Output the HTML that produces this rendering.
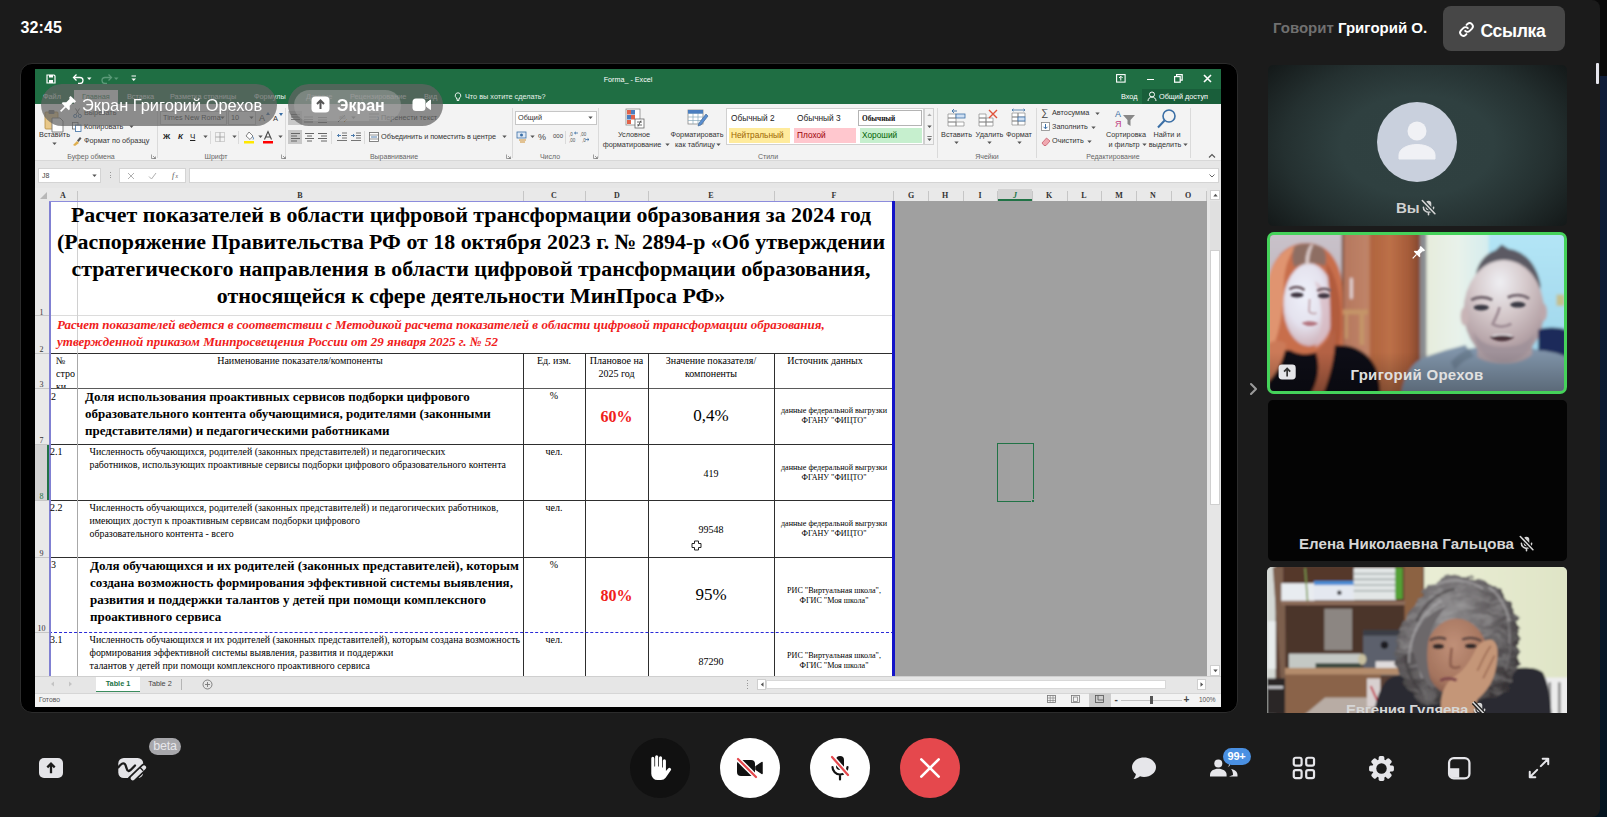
<!DOCTYPE html>
<html lang="ru">
<head>
<meta charset="utf-8">
<title>Конференция</title>
<style>
*{box-sizing:border-box;margin:0;padding:0}
html,body{width:1607px;height:817px;overflow:hidden;background:linear-gradient(#101e3a 0%,#0b1a30 50%,#04141f 100%);font-family:"Liberation Sans",sans-serif;}
.a{position:absolute}
#edgeTop{left:1590px;top:0;width:17px;height:76px;background:#0a0a0a}
#app{left:0;top:0;width:1600px;height:817px;background:#1b1b1b;border-radius:0 8px 8px 0}
#time{left:20.5px;top:19px;font-weight:bold;font-size:16px;line-height:18px;color:#fff;letter-spacing:.1px}
#share{left:20px;top:63px;width:1218px;height:650px;background:#000;border-radius:12px;border:1px solid #2c2c2c}
/* ---------- excel ---------- */
#xl{left:35px;top:69px;width:1186px;height:638px;background:#e6e6e6;overflow:hidden;font-family:"Liberation Sans",sans-serif}
#xl .t{position:absolute;white-space:nowrap}
#xtitle{left:0;top:0;width:1186px;height:35px;background:#1f6e43}
#xrib{left:0;top:35px;width:1186px;height:57px;background:#f3f3f3;border-bottom:1px solid #d8d8d8}
#xfb{left:0;top:92px;width:1186px;height:27px;background:#e6e6e6}
#xch{left:0;top:119px;width:1186px;height:13px;background:#e9e9e9;font-family:"Liberation Serif",serif;font-size:8px;color:#333}
#xch span{position:absolute;top:3px;font-weight:bold;width:20px;margin-left:-10px;text-align:center;line-height:10px}
#xch i{position:absolute;top:3px;width:1px;height:10px;background:#c6c6c6}
#xrh{left:0;top:132px;width:14px;height:475px;background:#e9e9e9;font-family:"Liberation Serif",serif;font-size:8px;color:#333}
#xrh span{position:absolute;left:0;width:13px;text-align:center;line-height:9px}
#xrh i{position:absolute;left:0;width:14px;height:1px;background:#c6c6c6}
#sheet{left:14px;top:132px;width:1159px;height:475.5px;background:#a0a0a0;overflow:hidden}
#page{left:0;top:0;width:845px;height:475px;background:#fff;font-family:"Liberation Serif",serif;color:#000}
#page .h{position:absolute;height:1px;background:#2e2e2e}
#page .v{position:absolute;width:1px;background:#2e2e2e}
#page .c{position:absolute;text-align:center;white-space:nowrap}
#page .l{position:absolute;white-space:nowrap}
#xtabs{left:0;top:607px;width:1186px;height:17px;background:#e6e6e6;border-top:1px solid #cfcfcf}
#xstat{left:0;top:624px;width:1186px;height:14px;background:#f3f3f3;border-top:1px solid #d6d6d6}
/*XLCSS*/
/* ---------- right column ---------- */
.tile{left:1268px;width:299px;border-radius:5px;overflow:hidden}
.micoff{color:#d4d4d4;width:17px;height:18px}
.tname{left:0;width:100%;text-align:center;font-weight:bold;font-size:15px;color:#d6d6d6;line-height:18px;white-space:nowrap}
#spk{left:1273px;top:19px;font-weight:bold;font-size:15px;line-height:18px;color:#fff;white-space:nowrap}
#linkbtn{left:1443px;top:6px;width:122px;height:45px;background:#474747;border-radius:8px}
#scrollind{left:1596px;top:63px;width:3px;height:21px;background:#e6e6ee;border-radius:1px}
#t1{top:65px;height:161px;--mbg:#2c3b3b;background:radial-gradient(ellipse 64% 78% at 50% 50%,#304141 0%,#2f4040 40%,#243030 70%,#141919 100%)}
#t2{left:1267px;width:300px;top:232px;height:162px;border:3px solid #45d25a;border-radius:7px;background:#888}
#t3{left:1267.5px;top:400px;height:161px;background:#040404;--mbg:#040404}
#t4{left:1267px;width:300px;top:567px;height:146px;background:#999;border-radius:5px 5px 0 0}
.pill{border-radius:21px;background:rgba(100,100,100,.72);-webkit-backdrop-filter:blur(.5px);backdrop-filter:blur(.5px)}
/*TILECSS*/
/* ---------- bottom bar ---------- */
.cbtn{top:738px;width:60px;height:60px;border-radius:50%}
/*BARCSS*/
</style>
</head>
<body>
<svg width="0" height="0" style="position:absolute"><defs>
<g id="micoff"><path d="M8 1.800a2.800 2.800 0 0 1 2.800 2.800v3.800a2.800 2.800 0 0 1-5.600 0V4.600A2.800 2.800 0 0 1 8 1.800z" fill="currentColor"/><path d="M2.900 8.200a5.100 5.100 0 0 0 10.200 0M8 13.400v2.400" fill="none" stroke="currentColor" stroke-width="1.600" stroke-linecap="round"/><path d="M1.800 1.500l12.600 13.200" stroke="var(--mbg,#1b1b1b)" stroke-width="4"/><path d="M1.800 1.500l12.600 13.200" stroke="currentColor" stroke-width="1.600" stroke-linecap="round"/></g>
</defs></svg>
<div id="edgeTop" class="a"></div>
<div id="app" class="a"></div>
<div id="time" class="a">32:45</div>
<div id="share" class="a"></div>
<div id="xl" class="a">
<div id="xtitle" class="a"></div>
<div id="xrib" class="a"></div>
<div id="xfb" class="a"></div>
<div id="xch" class="a">
<span style="left:28px">A</span><span style="left:265px">B</span><span style="left:519px">C</span><span style="left:582px">D</span><span style="left:676px">E</span><span style="left:799px">F</span>
<span style="left:876px">G</span><span style="left:910px">H</span><span style="left:945px">I</span><span style="left:1014px">K</span><span style="left:1049px">L</span><span style="left:1084px">M</span><span style="left:1118px">N</span><span style="left:1153px">O</span>
<i style="left:42px"></i><i style="left:488px"></i><i style="left:550px"></i><i style="left:613px"></i><i style="left:739px"></i><i style="left:858px"></i><i style="left:893px"></i><i style="left:928px"></i><i style="left:962px"></i><i style="left:997px"></i><i style="left:1032px"></i><i style="left:1066px"></i><i style="left:1101px"></i><i style="left:1136px"></i><i style="left:1171px"></i>
<b class="a" style="left:963px;top:1px;width:34px;height:12px;background:#d3d3d3;border-bottom:2px solid #217346"></b>
<span style="left:980px;color:#217346;font-style:italic">J</span>
</div>
<div id="xrh" class="a">
<b class="a" style="left:0;top:243px;width:14px;height:57px;background:#d3d3d3;border-right:2px solid #217346"></b>
<span style="top:106.500px">1</span><span style="top:143.500px">2</span><span style="top:178.500px">3</span><span style="top:234.500px">7</span><span style="top:290.500px;color:#217346">8</span><span style="top:347.500px">9</span><span style="top:422.500px">10</span>
<i style="top:114px"></i><i style="top:152px"></i><i style="top:187px"></i><i style="top:243px"></i><i style="top:299px"></i><i style="top:356px"></i><i style="top:431px"></i>
</div>
<div id="sheet" class="a">
<div id="page" class="a">
<!--PAGE-->
<div class="h" style="left:0px;top:114px;width:844px;background:#dcdcdc"></div>
<div class="v" style="left:28px;top:0px;height:152px;background:#d0d0d0"></div>
<div class="h" style="left:0px;top:152px;width:844px;"></div>
<div class="h" style="left:0px;top:243px;width:844px;"></div>
<div class="h" style="left:0px;top:299px;width:844px;"></div>
<div class="h" style="left:0px;top:356px;width:844px;"></div>
<div class="h" style="left:0px;top:187px;width:844px;background:#5a5a5a"></div>
<div class="v" style="left:28px;top:152px;height:323px;background:#a8a8a8"></div>
<div class="v" style="left:474px;top:152px;height:323px;"></div>
<div class="v" style="left:536px;top:152px;height:323px;"></div>
<div class="v" style="left:599px;top:152px;height:323px;"></div>
<div class="v" style="left:725px;top:152px;height:323px;"></div>
<div class="h" style="left:0;top:431px;width:845px;height:0;background:none;border-top:1.5px dashed #2a2ad8"></div>
<div class="v" style="left:0;top:0;height:475px;width:1.6px;background:#8080d2"></div>
<div class="h" style="left:0;top:0;width:845px;background:#8c8cdc"></div>
<div class="c" style="left:0.0px;width:844px;top:0.1px;font-size:21.9px;line-height:27px;font-weight:bold;">Расчет показателей в области цифровой трансформации образования за 2024 год<br>(Распоряжение Правительства РФ от 18 октября 2023 г. № 2894-р «Об утверждении<br>стратегического направления в области цифровой трансформации образования,<br>относящейся к сфере деятельности МинПроса РФ»</div>
<div class="l" style="left:8.0px;top:115.1px;font-size:13px;line-height:17px;font-weight:bold;font-style:italic;color:#f0201a;">Расчет показателей ведется в соответствии с Методикой расчета показателей в области цифровой трансформации образования,<br>утвержденной приказом Минпросвещения России от 29 января 2025 г. № 52</div>
<div class="l" style="left:7.0px;top:153.1px;font-size:10px;line-height:13px;height:34px;overflow:hidden;">№<br>стро<br>ки</div>
<div class="c" style="left:31.0px;width:440px;top:153.1px;font-size:10px;line-height:13px;">Наименование показателя/компоненты</div>
<div class="c" style="left:475.0px;width:60px;top:153.1px;font-size:10px;line-height:13px;">Ед. изм.</div>
<div class="c" style="left:536.5px;width:62px;top:153.1px;font-size:10px;line-height:13px;">Плановое на<br>2025 год</div>
<div class="c" style="left:600.0px;width:124px;top:153.1px;font-size:10px;line-height:13px;">Значение показателя/<br>компоненты</div>
<div class="c" style="left:726.0px;width:100px;top:153.1px;font-size:10px;line-height:13px;">Источник данных</div>
<div class="l" style="left:2.0px;top:188.6px;font-size:10px;line-height:13px;">2</div>
<div class="l" style="left:36.0px;top:187.3px;font-size:13px;line-height:17px;font-weight:bold;">Доля использования проактивных сервисов подборки цифрового<br>образовательного контента обучающимися, родителями (законными<br>представителями) и педагогическими работниками</div>
<div class="c" style="left:475.0px;width:60px;top:187.6px;font-size:10px;line-height:13px;">%</div>
<div class="c" style="left:536.5px;width:62px;top:206.6px;font-size:16px;line-height:18px;font-weight:bold;color:#f0201a;">60%</div>
<div class="c" style="left:600.0px;width:124px;top:206.3px;font-size:17px;line-height:18px;">0,4%</div>
<div class="c" style="left:726.0px;width:118px;top:205.3px;font-size:8.1px;line-height:10px;">данные федеральной выгрузки<br>ФГАНУ "ФИЦТО"</div>
<div class="l" style="left:1.0px;top:244.1px;font-size:10px;line-height:13px;">2.1</div>
<div class="l" style="left:40.5px;top:244.2px;font-size:9.9px;line-height:13px;">Численность обучающихся, родителей (законных представителей) и педагогических<br>работников, использующих проактивные сервисы подборки цифрового образовательного контента</div>
<div class="c" style="left:475.0px;width:60px;top:244.1px;font-size:10px;line-height:13px;">чел.</div>
<div class="c" style="left:600.0px;width:124px;top:266.1px;font-size:10px;line-height:13px;">419</div>
<div class="c" style="left:726.0px;width:118px;top:261.8px;font-size:8.1px;line-height:10px;">данные федеральной выгрузки<br>ФГАНУ "ФИЦТО"</div>
<div class="l" style="left:1.0px;top:300.1px;font-size:10px;line-height:13px;">2.2</div>
<div class="l" style="left:40.5px;top:300.2px;font-size:9.9px;line-height:13px;">Численность обучающихся, родителей (законных представителей) и педагогических работников,<br>имеющих доступ к проактивным сервисам подборки цифрового<br>образовательного контента - всего</div>
<div class="c" style="left:475.0px;width:60px;top:300.1px;font-size:10px;line-height:13px;">чел.</div>
<div class="c" style="left:600.0px;width:124px;top:321.8px;font-size:10px;line-height:13px;">99548</div>
<div class="c" style="left:726.0px;width:118px;top:318.3px;font-size:8.1px;line-height:10px;">данные федеральной выгрузки<br>ФГАНУ "ФИЦТО"</div>
<div class="l" style="left:2.0px;top:357.1px;font-size:10px;line-height:13px;">3</div>
<div class="l" style="left:41.0px;top:355.6px;font-size:13px;line-height:17px;font-weight:bold;">Доля обучающихся и их родителей (законных представителей), которым<br>создана возможность формирования эффективной системы выявления,<br>развития и поддержки талантов у детей при помощи комплексного<br>проактивного сервиса</div>
<div class="c" style="left:475.0px;width:60px;top:357.1px;font-size:10px;line-height:13px;">%</div>
<div class="c" style="left:536.5px;width:62px;top:385.6px;font-size:16px;line-height:18px;font-weight:bold;color:#f0201a;">80%</div>
<div class="c" style="left:600.0px;width:124px;top:385.3px;font-size:17px;line-height:18px;">95%</div>
<div class="c" style="left:726.0px;width:118px;top:384.8px;font-size:8.1px;line-height:10px;">РИС "Виртуальная школа",<br>ФГИС "Моя школа"</div>
<div class="l" style="left:1.0px;top:432.1px;font-size:10px;line-height:13px;">3.1</div>
<div class="l" style="left:40.5px;top:432.2px;font-size:9.9px;line-height:13px;">Численность обучающихся и их родителей (законных представителей), которым создана возможность<br>формирования эффективной системы выявления, развития и поддержки<br>талантов у детей при помощи комплексного проактивного сервиса</div>
<div class="c" style="left:475.0px;width:60px;top:432.1px;font-size:10px;line-height:13px;">чел.</div>
<div class="c" style="left:600.0px;width:124px;top:453.6px;font-size:10px;line-height:13px;">87290</div>
<div class="c" style="left:726.0px;width:118px;top:450.3px;font-size:8.1px;line-height:10px;">РИС "Виртуальная школа",<br>ФГИС "Моя школа"</div>
<!--/PAGE-->
</div>
<div class="a" style="left:843px;top:0;width:3px;height:475px;background:#1414c8"></div>
<div class="a" style="left:948px;top:242px;width:37px;height:59px;border:1.5px solid #217346"></div>
<div class="a" style="left:982px;top:298px;width:4px;height:4px;background:#217346;border:0.5px solid #a0a0a0"></div>
<svg class="a" style="left:642px;top:339px" width="11" height="11" viewBox="0 0 11 11"><path d="M3.500 1h4v2.500H10v4H7.500V10h-4V7.500H1v-4h2.500z" fill="#fff" stroke="#222" stroke-width="1"/></svg>
<!--SHEETX-->
</div>
<div id="xtabs" class="a"></div>
<div id="xstat" class="a"></div>
<!--XL-->
<svg class="a" style="left:11.0px;top:5.0px" width="10" height="10" viewBox="0 0 10 10"><path d="M1 1h7l1 1v7H1z" fill="none" stroke="#fff" stroke-width="1.200"/><rect x="3" y="6" width="4" height="3" fill="#fff"/><rect x="3" y="1" width="4" height="2.500" fill="#fff"/></svg>
<svg class="a" style="left:37.0px;top:4.0px" width="14" height="11" viewBox="0 0 14 11"><path d="M2 4.500h6a3 3 0 0 1 0 6H6" fill="none" stroke="#fff" stroke-width="1.300"/><path d="M4.500 1.500L1.500 4.500l3 3" fill="none" stroke="#fff" stroke-width="1.300"/></svg>
<svg class="a" style="left:52.0px;top:8.0px" width="5" height="4" viewBox="0 0 5 4"><path d="M0 .5h4.500L2.200 3z" fill="#fff"/></svg>
<svg class="a" style="left:64.0px;top:4.0px" width="14" height="11" viewBox="0 0 14 11"><path d="M12 4.500H6a3 3 0 0 0 0 6h2" fill="none" stroke="#5b9a78" stroke-width="1.300"/><path d="M9.500 1.500l3 3-3 3" fill="none" stroke="#5b9a78" stroke-width="1.300"/></svg>
<svg class="a" style="left:79.0px;top:8.0px" width="5" height="4" viewBox="0 0 5 4"><path d="M0 .5h4.500L2.200 3z" fill="#5b9a78"/></svg>
<svg class="a" style="left:96.0px;top:6.0px" width="6" height="7" viewBox="0 0 6 7"><path d="M.5 1h4.500" stroke="#fff" stroke-width="1"/><path d="M.5 3.500h4.500L2.700 6z" fill="#fff"/></svg>
<div class="t" style="left:533.0px;width:120px;text-align:center;top:6.1px;font-size:7.2px;line-height:9.2px;color:#fff;">Forma_ - Excel</div>
<svg class="a" style="left:1081.0px;top:5.0px" width="10" height="9" viewBox="0 0 10 9"><rect x=".6" y=".6" width="8.500" height="7.500" fill="none" stroke="#fff" stroke-width="1.100"/><path d="M4.800 6.500v-4M3 4l1.800-1.800L6.600 4" fill="none" stroke="#fff" stroke-width="1"/></svg>
<div class="a" style="left:1112.0px;top:9.5px;width:7.0px;height:1.5px;background:#fff"></div>
<svg class="a" style="left:1139.0px;top:5.0px" width="9" height="9" viewBox="0 0 9 9"><rect x=".6" y="2.600" width="5.600" height="5.600" fill="none" stroke="#fff" stroke-width="1.200"/><path d="M2.600 2.600V.6h5.600v5.600H6.200" fill="none" stroke="#fff" stroke-width="1.200"/></svg>
<svg class="a" style="left:1168.0px;top:5.0px" width="9" height="9" viewBox="0 0 9 9"><path d="M1 1l7 7M8 1L1 8" stroke="#fff" stroke-width="1.600"/></svg>
<div class="t" style="left:8.0px;top:23.4px;font-size:7.3px;line-height:9.3px;color:#e6f0ea;">Файл</div>
<div class="a" style="left:39.0px;top:21.0px;width:44.0px;height:14.0px;background:#f3f3f3"></div>
<div class="t" style="left:47.0px;top:23.4px;font-size:7.3px;line-height:9.3px;color:#217346;">Главная</div>
<div class="t" style="left:92.0px;top:23.4px;font-size:7.3px;line-height:9.3px;color:#e6f0ea;">Вставка</div>
<div class="t" style="left:135.0px;top:23.4px;font-size:7.3px;line-height:9.3px;color:#e6f0ea;">Разметка страницы</div>
<div class="t" style="left:219.0px;top:23.4px;font-size:7.3px;line-height:9.3px;color:#e6f0ea;">Формулы</div>
<div class="t" style="left:271.0px;top:23.4px;font-size:7.3px;line-height:9.3px;color:#e6f0ea;">Данные</div>
<div class="t" style="left:315.0px;top:23.4px;font-size:7.3px;line-height:9.3px;color:#e6f0ea;">Рецензирование</div>
<div class="t" style="left:389.0px;top:23.4px;font-size:7.3px;line-height:9.3px;color:#e6f0ea;">Вид</div>
<svg class="a" style="left:419.0px;top:23.0px" width="8" height="10" viewBox="0 0 8 10"><path d="M4 .8a2.800 2.800 0 0 0-1.400 5.200v1.200h2.800V6A2.800 2.800 0 0 0 4 .8zM2.800 8.500h2.400" fill="none" stroke="#fff" stroke-width=".9"/></svg>
<div class="t" style="left:430.0px;top:23.4px;font-size:7.3px;line-height:9.3px;color:#e6f0ea;">Что вы хотите сделать?</div>
<div class="t" style="left:1086.0px;top:23.4px;font-size:7.3px;line-height:9.3px;color:#fff;">Вход</div>
<div class="a" style="left:1107.0px;top:20.0px;width:79.0px;height:15.0px;background:#195e3a"></div>
<svg class="a" style="left:1112.0px;top:22.0px" width="10" height="11" viewBox="0 0 10 11"><circle cx="5" cy="3.500" r="2.500" fill="none" stroke="#fff" stroke-width="1"/><path d="M1 10c0-2.500 2-4 4-4s4 1.500 4 4" fill="none" stroke="#fff" stroke-width="1"/></svg>
<div class="t" style="left:1124.0px;top:23.4px;font-size:7.3px;line-height:9.3px;color:#fff;">Общий доступ</div>
<div class="a" style="left:122.0px;top:39.0px;width:1.0px;height:50.0px;background:#dadada"></div>
<div class="a" style="left:250.0px;top:39.0px;width:1.0px;height:50.0px;background:#dadada"></div>
<div class="a" style="left:477.0px;top:39.0px;width:1.0px;height:50.0px;background:#dadada"></div>
<div class="a" style="left:563.0px;top:39.0px;width:1.0px;height:50.0px;background:#dadada"></div>
<div class="a" style="left:902.0px;top:39.0px;width:1.0px;height:50.0px;background:#dadada"></div>
<div class="a" style="left:1001.0px;top:39.0px;width:1.0px;height:50.0px;background:#dadada"></div>
<div class="a" style="left:1155.0px;top:39.0px;width:1.0px;height:50.0px;background:#dadada"></div>
<div class="t" style="left:-4.0px;width:120px;text-align:center;top:83.0px;font-size:7px;line-height:9px;color:#666;">Буфер обмена</div>
<div class="t" style="left:121.0px;width:120px;text-align:center;top:83.0px;font-size:7px;line-height:9px;color:#666;">Шрифт</div>
<div class="t" style="left:299.0px;width:120px;text-align:center;top:83.0px;font-size:7px;line-height:9px;color:#666;">Выравнивание</div>
<div class="t" style="left:455.0px;width:120px;text-align:center;top:83.0px;font-size:7px;line-height:9px;color:#666;">Число</div>
<div class="t" style="left:673.0px;width:120px;text-align:center;top:83.0px;font-size:7px;line-height:9px;color:#666;">Стили</div>
<div class="t" style="left:892.0px;width:120px;text-align:center;top:83.0px;font-size:7px;line-height:9px;color:#666;">Ячейки</div>
<div class="t" style="left:1018.0px;width:120px;text-align:center;top:83.0px;font-size:7px;line-height:9px;color:#666;">Редактирование</div>
<svg class="a" style="left:116.0px;top:85.0px" width="5" height="5" viewBox="0 0 5 5"><path d="M.5 .5v4h4M2 2l2.500 2.500M4.500 2.500v2h-2" fill="none" stroke="#777" stroke-width=".7"/></svg>
<svg class="a" style="left:246.0px;top:85.0px" width="5" height="5" viewBox="0 0 5 5"><path d="M.5 .5v4h4M2 2l2.500 2.500M4.500 2.500v2h-2" fill="none" stroke="#777" stroke-width=".7"/></svg>
<svg class="a" style="left:471.0px;top:85.0px" width="5" height="5" viewBox="0 0 5 5"><path d="M.5 .5v4h4M2 2l2.500 2.500M4.500 2.500v2h-2" fill="none" stroke="#777" stroke-width=".7"/></svg>
<svg class="a" style="left:558.0px;top:85.0px" width="5" height="5" viewBox="0 0 5 5"><path d="M.5 .5v4h4M2 2l2.500 2.500M4.500 2.500v2h-2" fill="none" stroke="#777" stroke-width=".7"/></svg>
<svg class="a" style="left:1173.0px;top:84.0px" width="8" height="6" viewBox="0 0 8 6"><path d="M1 4.500l3-3 3 3" fill="none" stroke="#555" stroke-width="1.100"/></svg>
<svg class="a" style="left:9.0px;top:40.0px" width="20" height="24" viewBox="0 0 20 24"><rect x="1" y="3" width="13" height="17" rx="1" fill="#e8c88a" stroke="#b48a3c" stroke-width=".8"/><rect x="4.500" y="1" width="6" height="4" rx="1" fill="#777"/><path d="M8 9h8l3 3v11H8z" fill="#fff" stroke="#777" stroke-width=".9"/></svg>
<div class="t" style="left:-40.5px;width:120px;text-align:center;top:61.4px;font-size:7.3px;line-height:9.3px;color:#333;">Вставить</div>
<svg class="a" style="left:17.0px;top:73.0px" width="5" height="4" viewBox="0 0 5 4"><path d="M.3 .5h4.400L2.500 3z" fill="#555"/></svg>
<svg class="a" style="left:38.0px;top:39.0px" width="9" height="10" viewBox="0 0 9 10"><circle cx="2.200" cy="8" r="1.600" fill="none" stroke="#3a6ea5" stroke-width=".9"/><circle cx="6.800" cy="8" r="1.600" fill="none" stroke="#3a6ea5" stroke-width=".9"/><path d="M2.800 6.500L6.500 .5M6.200 6.500L2.500 .5" stroke="#666" stroke-width=".9"/></svg>
<div class="t" style="left:49.0px;top:39.4px;font-size:7.3px;line-height:9.3px;color:#333;">Вырезать</div>
<svg class="a" style="left:37.0px;top:53.0px" width="10" height="10" viewBox="0 0 10 10"><rect x=".5" y=".5" width="5.500" height="6.500" fill="#fff" stroke="#666" stroke-width=".8"/><rect x="3.500" y="3" width="5.500" height="6.500" fill="#fff" stroke="#3a6ea5" stroke-width=".8"/></svg>
<div class="t" style="left:49.0px;top:53.4px;font-size:7.3px;line-height:9.3px;color:#333;">Копировать</div>
<svg class="a" style="left:94.0px;top:56.0px" width="5" height="4" viewBox="0 0 5 4"><path d="M.3 .5h4.400L2.500 3z" fill="#555"/></svg>
<svg class="a" style="left:37.0px;top:67.0px" width="10" height="10" viewBox="0 0 10 10"><path d="M1 9l4-4 2 2-4 3z" fill="#e0b050"/><path d="M5 4.500l3-3.500 1.500 1.500L6.500 6z" fill="#555"/></svg>
<div class="t" style="left:49.0px;top:67.3px;font-size:7.3px;line-height:9.3px;color:#333;">Формат по образцу</div>
<div class="a" style="left:125.0px;top:42.0px;width:67.0px;height:14.0px;background:#fff;border:1px solid #c6c6c6"></div>
<div class="t" style="left:128.0px;top:44.4px;font-size:7.3px;line-height:9.3px;color:#333;">Times New Roma</div>
<svg class="a" style="left:185.0px;top:47.0px" width="5" height="4" viewBox="0 0 5 4"><path d="M.3 .5h4.400L2.500 3z" fill="#555"/></svg>
<div class="a" style="left:193.0px;top:42.0px;width:28.0px;height:14.0px;background:#fff;border:1px solid #c6c6c6"></div>
<div class="t" style="left:196.0px;top:44.4px;font-size:7.3px;line-height:9.3px;color:#333;">10</div>
<svg class="a" style="left:214.0px;top:47.0px" width="5" height="4" viewBox="0 0 5 4"><path d="M.3 .5h4.400L2.500 3z" fill="#555"/></svg>
<div class="t" style="left:224.0px;top:43.5px;font-size:9px;line-height:11px;color:#333;">A</div>
<div class="t" style="left:238.0px;top:45.2px;font-size:7.5px;line-height:9.5px;color:#333;">A</div>
<svg class="a" style="left:231.0px;top:43.0px" width="4" height="3" viewBox="0 0 4 3"><path d="M0 3L2 0l2 3z" fill="#3a6ea5"/></svg>
<svg class="a" style="left:244.0px;top:44.0px" width="4" height="3" viewBox="0 0 4 3"><path d="M0 0h4L2 3z" fill="#3a6ea5"/></svg>
<div class="t" style="left:128.0px;top:63.0px;font-size:8px;line-height:10px;color:#222;font-weight:bold;">Ж</div>
<div class="t" style="left:143.0px;top:63.0px;font-size:8px;line-height:10px;color:#222;font-weight:bold;font-style:italic;">К</div>
<div class="t" style="left:155.0px;top:63.0px;font-size:8px;line-height:10px;color:#222;text-decoration:underline;">Ч</div>
<svg class="a" style="left:168.0px;top:66.0px" width="5" height="4" viewBox="0 0 5 4"><path d="M.3 .5h4.400L2.500 3z" fill="#555"/></svg>
<svg class="a" style="left:197.0px;top:66.0px" width="5" height="4" viewBox="0 0 5 4"><path d="M.3 .5h4.400L2.500 3z" fill="#555"/></svg>
<svg class="a" style="left:223.0px;top:66.0px" width="5" height="4" viewBox="0 0 5 4"><path d="M.3 .5h4.400L2.500 3z" fill="#555"/></svg>
<svg class="a" style="left:243.0px;top:66.0px" width="5" height="4" viewBox="0 0 5 4"><path d="M.3 .5h4.400L2.500 3z" fill="#555"/></svg>
<svg class="a" style="left:180.0px;top:63.0px" width="11" height="11" viewBox="0 0 11 11"><rect x=".5" y=".5" width="9" height="9" fill="none" stroke="#999" stroke-width=".8" stroke-dasharray="1 1"/><path d="M5 .5v9M.5 5h9" stroke="#999" stroke-width=".8"/></svg>
<div class="a" style="left:175.0px;top:62.0px;width:1.0px;height:13.0px;background:#dadada"></div>
<div class="a" style="left:203.0px;top:62.0px;width:1.0px;height:13.0px;background:#dadada"></div>
<div class="a" style="left:296.0px;top:62.0px;width:1.0px;height:13.0px;background:#dadada"></div>
<div class="a" style="left:329.0px;top:62.0px;width:1.0px;height:13.0px;background:#dadada"></div>
<svg class="a" style="left:208.0px;top:61.0px" width="12" height="14" viewBox="0 0 12 14"><path d="M3 6l3-4 4 4-3 3.500z" fill="#fff" stroke="#666" stroke-width=".8"/><path d="M9.500 6.500c1 1.500 1.500 2.500 .6 3" stroke="#3a6ea5" fill="none" stroke-width=".9"/><rect x="1" y="11" width="10" height="2.500" fill="#ffe800"/></svg>
<svg class="a" style="left:227.0px;top:61.0px" width="12" height="14" viewBox="0 0 12 14"><path d="M2.500 9.500L6 1.500l3.500 8M3.800 7h4.400" fill="none" stroke="#444" stroke-width="1.100"/><rect x="1" y="11" width="10" height="2.500" fill="#f00"/></svg>
<div class="a" style="left:253.0px;top:42.0px;width:14.0px;height:14.0px;background:#c8c8c8"></div>
<svg class="a" style="left:256.0px;top:45.0px" width="9" height="10" viewBox="0 0 9 10"><rect x="0" y="0.0" width="9" height="1" fill="#777"/><rect x="0" y="2.5" width="9" height="1" fill="#777"/><rect x="0" y="5.0" width="9" height="1" fill="#777"/><rect x="0" y="7.5" width="0" height="1" fill="#777"/></svg>
<svg class="a" style="left:269.0px;top:45.0px" width="9" height="10" viewBox="0 0 9 10"><rect x="0" y="0.0" width="0" height="1" fill="#777"/><rect x="0" y="2.5" width="9" height="1" fill="#777"/><rect x="0" y="5.0" width="9" height="1" fill="#777"/><rect x="0" y="7.5" width="9" height="1" fill="#777"/></svg>
<svg class="a" style="left:283.0px;top:48.0px" width="9" height="10" viewBox="0 0 9 10"><rect x="0" y="0.0" width="9" height="1" fill="#777"/><rect x="0" y="2.5" width="9" height="1" fill="#777"/><rect x="0" y="5.0" width="9" height="1" fill="#777"/></svg>
<svg class="a" style="left:302.0px;top:43.0px" width="12" height="12" viewBox="0 0 12 12"><path d="M1 10l7-7" stroke="#666" stroke-width="1"/><text x="2" y="7" font-size="6" fill="#777" font-family="Liberation Sans">ab</text><path d="M7 10l3-3" stroke="#d09030" stroke-width="1"/></svg>
<svg class="a" style="left:316.0px;top:47.0px" width="5" height="4" viewBox="0 0 5 4"><path d="M.3 .5h4.400L2.500 3z" fill="#555"/></svg>
<svg class="a" style="left:334.0px;top:43.0px" width="11" height="11" viewBox="0 0 11 11"><path d="M0 2h10M0 5h7M0 8h10" stroke="#777" stroke-width=".9"/><path d="M7.500 5h2v2.500h-1.500" fill="none" stroke="#3a6ea5" stroke-width=".9"/></svg>
<div class="t" style="left:346.0px;top:44.4px;font-size:7.3px;line-height:9.3px;color:#333;">Перенести текст</div>
<div class="a" style="left:253.0px;top:61.0px;width:14.0px;height:14.0px;background:#c8c8c8"></div>
<svg class="a" style="left:256.0px;top:64.0px" width="9" height="10" viewBox="0 0 9 10"><rect x="0" y="0.0" width="9" height="1" fill="#666"/><rect x="0" y="2.5" width="6" height="1" fill="#666"/><rect x="0" y="5.0" width="9" height="1" fill="#666"/><rect x="0" y="7.5" width="6" height="1" fill="#666"/></svg>
<svg class="a" style="left:270.0px;top:64.0px" width="9" height="10" viewBox="0 0 9 10"><rect x="0.0" y="0.0" width="9" height="1" fill="#666"/><rect x="2.0" y="2.5" width="5" height="1" fill="#666"/><rect x="0.0" y="5.0" width="9" height="1" fill="#666"/><rect x="2.0" y="7.5" width="5" height="1" fill="#666"/></svg>
<svg class="a" style="left:283.0px;top:64.0px" width="9" height="10" viewBox="0 0 9 10"><rect x="0" y="0.0" width="9" height="1" fill="#666"/><rect x="3" y="2.5" width="6" height="1" fill="#666"/><rect x="0" y="5.0" width="9" height="1" fill="#666"/><rect x="3" y="7.5" width="6" height="1" fill="#666"/></svg>
<svg class="a" style="left:302.0px;top:63.0px" width="11" height="11" viewBox="0 0 11 11"><path d="M5 1h5M5 3.500h5M5 6h5M0 8.500h10" stroke="#666" stroke-width=".9"/><path d="M4 3.500H.5M2 2L.5 3.500 2 5" stroke="#3a6ea5" stroke-width=".9" fill="none"/></svg>
<svg class="a" style="left:316.0px;top:63.0px" width="11" height="11" viewBox="0 0 11 11"><path d="M5 1h5M5 3.500h5M5 6h5M0 8.500h10" stroke="#666" stroke-width=".9"/><path d="M0 3.500h3.500M2 2l1.500 1.500L2 5" stroke="#3a6ea5" stroke-width=".9" fill="none"/></svg>
<svg class="a" style="left:334.0px;top:63.0px" width="10" height="11" viewBox="0 0 10 11"><rect x=".5" y=".5" width="9" height="9" fill="#fff" stroke="#666" stroke-width=".8"/><path d="M.5 3h9M.5 7h9" stroke="#666" stroke-width=".7"/><path d="M2 5h6" stroke="#3a6ea5" stroke-width=".9"/></svg>
<div class="t" style="left:346.0px;top:63.4px;font-size:7.3px;line-height:9.3px;color:#333;letter-spacing:-.05px;">Объединить и поместить в центре</div>
<svg class="a" style="left:467.0px;top:66.0px" width="5" height="4" viewBox="0 0 5 4"><path d="M.3 .5h4.400L2.500 3z" fill="#555"/></svg>
<div class="a" style="left:480.0px;top:42.0px;width:82.0px;height:14.0px;background:#fff;border:1px solid #c6c6c6"></div>
<div class="t" style="left:483.0px;top:44.4px;font-size:7.3px;line-height:9.3px;color:#333;">Общий</div>
<svg class="a" style="left:553.0px;top:47.0px" width="5" height="4" viewBox="0 0 5 4"><path d="M.3 .5h4.400L2.500 3z" fill="#555"/></svg>
<svg class="a" style="left:481.0px;top:62.0px" width="12" height="12" viewBox="0 0 12 12"><rect x="1" y="1" width="9" height="6" fill="#dfe9f5" stroke="#3a6ea5" stroke-width=".8"/><circle cx="5.500" cy="4" r="1.500" fill="#3a6ea5"/><path d="M3 9h7M4 11h5" stroke="#d09030" stroke-width="1"/></svg>
<svg class="a" style="left:495.0px;top:66.0px" width="5" height="4" viewBox="0 0 5 4"><path d="M.3 .5h4.400L2.500 3z" fill="#555"/></svg>
<div class="t" style="left:503.0px;top:62.5px;font-size:9px;line-height:11px;color:#444;">%</div>
<div class="t" style="left:518.0px;top:63.0px;font-size:6px;line-height:8px;color:#444;">000</div>
<div class="a" style="left:530.0px;top:62.0px;width:1.0px;height:13.0px;background:#dadada"></div>
<svg class="a" style="left:534.0px;top:62.0px" width="10" height="12" viewBox="0 0 10 12"><text x="0" y="5" font-size="4.500" fill="#555" font-family="Liberation Sans">,0</text><text x="0" y="10.500" font-size="4.500" fill="#555" font-family="Liberation Sans">,00</text><path d="M9 2H5.500M7 .8L5.500 2 7 3.200" stroke="#3a6ea5" stroke-width=".8" fill="none"/></svg>
<svg class="a" style="left:545.0px;top:62.0px" width="10" height="12" viewBox="0 0 10 12"><text x="0" y="5" font-size="4.500" fill="#555" font-family="Liberation Sans">,00</text><text x="2" y="10.500" font-size="4.500" fill="#555" font-family="Liberation Sans">,0</text><path d="M5.500 8.500H9M7.500 7.300L9 8.500 7.500 9.700" stroke="#3a6ea5" stroke-width=".8" fill="none"/></svg>
<svg class="a" style="left:590.0px;top:39.0px" width="20" height="22" viewBox="0 0 20 22"><rect x="1" y="1" width="14" height="16" fill="#fff" stroke="#888" stroke-width=".8"/><rect x="2" y="2" width="4" height="4.500" fill="#e0634a"/><rect x="6" y="2" width="4" height="4.500" fill="#4a7ec0"/><rect x="2" y="7" width="4" height="4.500" fill="#4a7ec0"/><rect x="6" y="7" width="4" height="4.500" fill="#e0634a"/><rect x="2" y="12" width="4" height="4" fill="#e0634a"/><rect x="10" y="11" width="9" height="9" fill="#fff" stroke="#666" stroke-width=".8"/><path d="M12 14h5M12 17h5M16 12.500l-3 6" stroke="#444" stroke-width=".8"/></svg>
<div class="t" style="left:539.0px;width:120px;text-align:center;top:60.9px;font-size:7.3px;line-height:9.3px;color:#333;">Условное</div>
<div class="t" style="left:537.0px;width:120px;text-align:center;top:70.8px;font-size:7.3px;line-height:9.3px;color:#333;">форматирование</div>
<svg class="a" style="left:630.0px;top:74.0px" width="5" height="4" viewBox="0 0 5 4"><path d="M.3 .5h4.400L2.500 3z" fill="#555"/></svg>
<svg class="a" style="left:652.0px;top:39.0px" width="22" height="22" viewBox="0 0 22 22"><rect x="1" y="2" width="15" height="14" fill="#fff" stroke="#888" stroke-width=".8"/><path d="M1 5.500h15M1 9h15M1 12.500h15M6 2v14M11 2v14" stroke="#8ab" stroke-width=".7"/><rect x="1" y="2" width="15" height="3.500" fill="#4a7ec0"/><path d="M19 6l2 2-7 9-3 1 1-3z" fill="#5a8ed0" stroke="#35608f" stroke-width=".6"/></svg>
<div class="t" style="left:602.0px;width:120px;text-align:center;top:60.9px;font-size:7.3px;line-height:9.3px;color:#333;">Форматировать</div>
<div class="t" style="left:600.0px;width:120px;text-align:center;top:70.8px;font-size:7.3px;line-height:9.3px;color:#333;">как таблицу</div>
<svg class="a" style="left:681.0px;top:74.0px" width="5" height="4" viewBox="0 0 5 4"><path d="M.3 .5h4.400L2.500 3z" fill="#555"/></svg>
<div class="a" style="left:691.0px;top:39.0px;width:198.0px;height:37.0px;background:#fff;border:1px solid #d0d0d0"></div>
<div class="t" style="left:696.0px;top:44.4px;font-size:8.3px;line-height:10.3px;color:#222;">Обычный 2</div>
<div class="t" style="left:762.0px;top:44.4px;font-size:8.3px;line-height:10.3px;color:#222;">Обычный 3</div>
<div class="a" style="left:823.0px;top:41.0px;width:64.0px;height:16.0px;background:#fff;border:1.500px solid #b4b4b4"></div>
<div class="t" style="left:827.0px;top:44.9px;font-size:7.3px;line-height:9.3px;color:#111;font-family:'Liberation Serif',serif;font-weight:bold;">Обычный</div>
<div class="a" style="left:694.0px;top:59.0px;width:61.0px;height:15.0px;background:#ffeb9c"></div>
<div class="t" style="left:696.0px;top:61.4px;font-size:8.3px;line-height:10.3px;color:#9c6500;">Нейтральный</div>
<div class="a" style="left:759.0px;top:59.0px;width:62.0px;height:15.0px;background:#ffc7ce"></div>
<div class="t" style="left:762.0px;top:61.4px;font-size:8.3px;line-height:10.3px;color:#9c0006;">Плохой</div>
<div class="a" style="left:825.0px;top:59.0px;width:62.0px;height:15.0px;background:#c6efce"></div>
<div class="t" style="left:827.0px;top:61.4px;font-size:8.3px;line-height:10.3px;color:#006100;">Хороший</div>
<div class="a" style="left:889.0px;top:39.0px;width:10.0px;height:37.0px;background:#f3f3f3;border:1px solid #d0d0d0"></div>
<svg class="a" style="left:891.5px;top:44.0px" width="5" height="4" viewBox="0 0 5 4"><path d="M.3 3L2.500 .5 4.700 3z" fill="#aaa"/></svg>
<svg class="a" style="left:891.5px;top:56.0px" width="5" height="4" viewBox="0 0 5 4"><path d="M.3 .5h4.400L2.500 3z" fill="#555"/></svg>
<svg class="a" style="left:891.5px;top:67.0px" width="5" height="6" viewBox="0 0 5 6"><path d="M.3 .5h4.400" stroke="#555" stroke-width=".8"/><path d="M.3 2.500h4.400L2.500 5z" fill="#555"/></svg>
<svg class="a" style="left:912.0px;top:39.0px" width="20" height="20" viewBox="0 0 20 20"><path d="M1 6h8v4H1zM1 10h8v4H1zM1 14h8v4H1zM9 14h8v4H9z" fill="#fff" stroke="#888" stroke-width=".7"/><rect x="9" y="6" width="9" height="4" fill="#cfe0f3" stroke="#3a6ea5" stroke-width=".8"/><path d="M10 3H5M7 1L5 3l2 2" stroke="#3a6ea5" stroke-width=".9" fill="none"/></svg>
<div class="t" style="left:861.5px;width:120px;text-align:center;top:60.9px;font-size:7.3px;line-height:9.3px;color:#333;">Вставить</div>
<svg class="a" style="left:943.0px;top:39.0px" width="22" height="20" viewBox="0 0 22 20"><path d="M1 6h7v4H1zM1 10h7v4H1zM1 14h7v4H1zM8 10h7v4H8zM8 14h7v4H8z" fill="#fff" stroke="#888" stroke-width=".7"/><path d="M11 2l8 8M19 2l-8 8" stroke="#e0533a" stroke-width="1.400"/></svg>
<div class="t" style="left:894.5px;width:120px;text-align:center;top:60.9px;font-size:7.3px;line-height:9.3px;color:#333;">Удалить</div>
<svg class="a" style="left:974.0px;top:39.0px" width="20" height="20" viewBox="0 0 20 20"><path d="M3 5h6v4H3zM3 9h6v4H3zM3 13h6v4H3zM9 13h7v4H9zM9 5h7v4H9z" fill="#fff" stroke="#888" stroke-width=".7"/><rect x="9" y="9" width="7" height="4" fill="#cfe0f3" stroke="#3a6ea5" stroke-width=".8"/><path d="M3 2h13M4.500 .8L3 2l1.500 1.200M14.500 .8L16 2l-1.500 1.200" stroke="#3a6ea5" stroke-width=".8" fill="none"/></svg>
<div class="t" style="left:924.0px;width:120px;text-align:center;top:60.9px;font-size:7.3px;line-height:9.3px;color:#333;">Формат</div>
<svg class="a" style="left:919.0px;top:72.0px" width="5" height="4" viewBox="0 0 5 4"><path d="M.3 .5h4.400L2.500 3z" fill="#555"/></svg>
<svg class="a" style="left:952.0px;top:72.0px" width="5" height="4" viewBox="0 0 5 4"><path d="M.3 .5h4.400L2.500 3z" fill="#555"/></svg>
<svg class="a" style="left:981.5px;top:72.0px" width="5" height="4" viewBox="0 0 5 4"><path d="M.3 .5h4.400L2.500 3z" fill="#555"/></svg>
<div class="t" style="left:1006.0px;top:38.0px;font-size:10px;line-height:12px;color:#444;">∑</div>
<div class="t" style="left:1017.0px;top:39.4px;font-size:7.3px;line-height:9.3px;color:#333;">Автосумма</div>
<svg class="a" style="left:1060.0px;top:42.5px" width="5" height="4" viewBox="0 0 5 4"><path d="M.3 .5h4.400L2.500 3z" fill="#555"/></svg>
<svg class="a" style="left:1006.0px;top:53.0px" width="9" height="10" viewBox="0 0 9 10"><rect x=".5" y=".5" width="8" height="8" fill="#fff" stroke="#888" stroke-width=".8"/><path d="M4.500 2v4.500M2.500 4.800l2 2 2-2" stroke="#3a6ea5" stroke-width="1" fill="none"/></svg>
<div class="t" style="left:1017.0px;top:53.4px;font-size:7.3px;line-height:9.3px;color:#333;">Заполнить</div>
<svg class="a" style="left:1056.0px;top:56.5px" width="5" height="4" viewBox="0 0 5 4"><path d="M.3 .5h4.400L2.500 3z" fill="#555"/></svg>
<svg class="a" style="left:1006.0px;top:67.0px" width="10" height="10" viewBox="0 0 10 10"><path d="M1 7l4.500-5 3.500 3-4 4.500H3z" fill="#f0a8b0" stroke="#c05060" stroke-width=".7"/></svg>
<div class="t" style="left:1017.0px;top:67.3px;font-size:7.3px;line-height:9.3px;color:#333;">Очистить</div>
<svg class="a" style="left:1052.0px;top:70.5px" width="5" height="4" viewBox="0 0 5 4"><path d="M.3 .5h4.400L2.500 3z" fill="#555"/></svg>
<svg class="a" style="left:1078.0px;top:39.0px" width="24" height="22" viewBox="0 0 24 22"><text x="2" y="8.500" font-size="9" fill="#3a6ea5" font-family="Liberation Sans">А</text><text x="2" y="18.500" font-size="9" fill="#c04080" font-family="Liberation Sans">Я</text><path d="M10 7h12l-4.500 5v6l-3-2v-4z" fill="#888"/></svg>
<div class="t" style="left:1031.0px;width:120px;text-align:center;top:60.9px;font-size:7.3px;line-height:9.3px;color:#333;">Сортировка</div>
<div class="t" style="left:1029.0px;width:120px;text-align:center;top:70.8px;font-size:7.3px;line-height:9.3px;color:#333;">и фильтр</div>
<svg class="a" style="left:1107.0px;top:74.0px" width="5" height="4" viewBox="0 0 5 4"><path d="M.3 .5h4.400L2.500 3z" fill="#555"/></svg>
<svg class="a" style="left:1121.0px;top:39.0px" width="22" height="22" viewBox="0 0 22 22"><circle cx="13" cy="8" r="6" fill="none" stroke="#3a6ea5" stroke-width="1.600"/><path d="M8.500 12.500L2 19.500" stroke="#3a6ea5" stroke-width="2"/></svg>
<div class="t" style="left:1072.0px;width:120px;text-align:center;top:60.9px;font-size:7.3px;line-height:9.3px;color:#333;">Найти и</div>
<div class="t" style="left:1070.0px;width:120px;text-align:center;top:70.8px;font-size:7.3px;line-height:9.3px;color:#333;">выделить</div>
<svg class="a" style="left:1148.0px;top:74.0px" width="5" height="4" viewBox="0 0 5 4"><path d="M.3 .5h4.400L2.500 3z" fill="#555"/></svg>
<div class="a" style="left:3.0px;top:99.0px;width:63.0px;height:15.0px;background:#fff;border:1px solid #d4d4d4"></div>
<div class="t" style="left:7.0px;top:102.0px;font-size:7px;line-height:9px;color:#444;">J8</div>
<svg class="a" style="left:57.0px;top:105.0px" width="5" height="4" viewBox="0 0 5 4"><path d="M.3 .5h4.400L2.500 3z" fill="#555"/></svg>
<div class="a" style="left:74.5px;top:103.0px;width:1.0px;height:7.0px;background:repeating-linear-gradient(#999 0 1px,transparent 1px 2.500px)"></div>
<div class="a" style="left:84.0px;top:99.0px;width:67.0px;height:15.0px;background:#fff;border:1px solid #d4d4d4"></div>
<svg class="a" style="left:92.0px;top:103.0px" width="8" height="8" viewBox="0 0 8 8"><path d="M1 1l6 6M7 1L1 7" stroke="#b0b0b0" stroke-width="1"/></svg>
<svg class="a" style="left:113.0px;top:103.0px" width="9" height="8" viewBox="0 0 9 8"><path d="M1 4.500l2.500 2.500L8 1" stroke="#b0b0b0" stroke-width="1" fill="none"/></svg>
<div class="t" style="left:137.0px;top:101.5px;font-size:8px;line-height:10px;color:#555;font-family:'Liberation Serif',serif;font-style:italic;">f</div>
<div class="t" style="left:140.5px;top:104.2px;font-size:5.5px;line-height:7.5px;color:#555;font-family:'Liberation Serif',serif;font-style:italic;">x</div>
<div class="a" style="left:154.0px;top:99.0px;width:1030.0px;height:15.0px;background:#fff;border:1px solid #d4d4d4"></div>
<svg class="a" style="left:1174.0px;top:105.0px" width="6" height="4" viewBox="0 0 6 4"><path d="M.5 .5l2.500 2.500 2.500-2.500" stroke="#555" stroke-width=".9" fill="none"/></svg>
<svg class="a" style="left:5.0px;top:123.0px" width="8" height="8" viewBox="0 0 8 8"><path d="M7 0v7H0z" fill="#b8b8b8"/></svg>
<svg class="a" style="left:15.0px;top:612.0px" width="5" height="6" viewBox="0 0 5 6"><path d="M4 .5L1 3l3 2.500z" fill="#c4c4c4"/></svg>
<svg class="a" style="left:33.0px;top:612.0px" width="5" height="6" viewBox="0 0 5 6"><path d="M1 .5l3 2.500-3 2.500z" fill="#c4c4c4"/></svg>
<div class="a" style="left:61.0px;top:608.0px;width:44.0px;height:15.0px;background:#fff;border-bottom:1.600px solid #3c8c5e"></div>
<div class="t" style="left:61.0px;width:44px;text-align:center;top:610.4px;font-size:7.3px;line-height:9.3px;color:#217346;font-weight:bold;">Table 1</div>
<div class="t" style="left:105.0px;width:40px;text-align:center;top:610.4px;font-size:7.3px;line-height:9.3px;color:#444;">Table 2</div>
<div class="a" style="left:146.0px;top:610.0px;width:1.0px;height:11.0px;background:#b5b5b5"></div>
<svg class="a" style="left:166.5px;top:610.0px" width="11" height="11" viewBox="0 0 11 11"><circle cx="5.500" cy="5.500" r="4.500" fill="none" stroke="#777" stroke-width=".9"/><path d="M5.500 3v5M3 5.500h5" stroke="#777" stroke-width=".9"/></svg>
<div class="a" style="left:712.0px;top:611.0px;width:1.0px;height:9.0px;background:repeating-linear-gradient(#999 0 1px,transparent 1px 2.500px)"></div>
<div class="a" style="left:722.0px;top:610.0px;width:9.0px;height:11.0px;background:#fff;border:1px solid #cfcfcf"></div>
<svg class="a" style="left:724.5px;top:613.0px" width="4" height="5" viewBox="0 0 4 5"><path d="M3.500 .3L.8 2.500l2.700 2.200z" fill="#555"/></svg>
<div class="a" style="left:731.0px;top:611.0px;width:400.0px;height:9.0px;background:#fff;border:1px solid #d8d8d8"></div>
<div class="a" style="left:1131.0px;top:610.0px;width:31.0px;height:11.0px;background:#e6e6e6"></div>
<div class="a" style="left:1162.0px;top:610.0px;width:9.0px;height:11.0px;background:#fff;border:1px solid #cfcfcf"></div>
<svg class="a" style="left:1164.5px;top:613.0px" width="4" height="5" viewBox="0 0 4 5"><path d="M.5 .3l2.700 2.200L.5 4.700z" fill="#555"/></svg>
<div class="t" style="left:4.0px;top:626.6px;font-size:6.8px;line-height:8.8px;color:#555;">Готово</div>
<svg class="a" style="left:1012.0px;top:626.0px" width="10" height="9" viewBox="0 0 10 9"><rect x=".5" y=".5" width="8" height="7" fill="none" stroke="#777" stroke-width=".8"/><path d="M.5 3h8M.5 5.500h8M3.200 .5v7M6 .5v7" stroke="#777" stroke-width=".6"/></svg>
<svg class="a" style="left:1036.0px;top:626.0px" width="10" height="9" viewBox="0 0 10 9"><rect x=".5" y=".5" width="8" height="7" fill="none" stroke="#777" stroke-width=".8"/><rect x="2.500" y="2" width="4" height="4.500" fill="none" stroke="#777" stroke-width=".7"/></svg>
<div class="a" style="left:1053.5px;top:624.0px;width:22.5px;height:13.5px;background:#cdcdcd"></div>
<svg class="a" style="left:1060.0px;top:626.0px" width="10" height="9" viewBox="0 0 10 9"><rect x=".5" y=".5" width="8" height="7" fill="none" stroke="#555" stroke-width=".8"/><path d="M3 .5v4.500h5.500" fill="none" stroke="#555" stroke-width=".8"/></svg>
<div class="t" style="left:1079.5px;top:624.5px;font-size:10px;line-height:12px;color:#444;font-weight:bold;">-</div>
<div class="a" style="left:1086.0px;top:630.8px;width:61.0px;height:0.8px;background:#c4c4c4"></div>
<div class="a" style="left:1115.0px;top:627.0px;width:2.5px;height:8.0px;background:#555"></div>
<div class="t" style="left:1148.5px;top:625.0px;font-size:10px;line-height:12px;color:#444;font-weight:bold;">+</div>
<div class="t" style="left:1164.0px;top:626.8px;font-size:6.5px;line-height:8.5px;color:#555;">100%</div>
<div class="a" style="left:1172.0px;top:119.0px;width:14.0px;height:488.0px;background:#e6e6e6"></div>
<div class="a" style="left:1175.0px;top:121.0px;width:10.0px;height:10.0px;background:#fff;border:1px solid #cfcfcf"></div>
<svg class="a" style="left:1177.5px;top:124.0px" width="5" height="4" viewBox="0 0 5 4"><path d="M.3 3.500L2.500 .8l2.200 2.700z" fill="#555"/></svg>
<div class="a" style="left:1175.0px;top:132.0px;width:10.0px;height:49.0px;background:#e0e0e0"></div>
<div class="a" style="left:1175.0px;top:181.0px;width:10.0px;height:255.0px;background:#fff;border:1px solid #d0d0d0"></div>
<div class="a" style="left:1175.0px;top:596.0px;width:10.0px;height:11.0px;background:#fff;border:1px solid #cfcfcf"></div>
<svg class="a" style="left:1177.5px;top:600.0px" width="5" height="4" viewBox="0 0 5 4"><path d="M.3 .5h4.400L2.500 3.200z" fill="#555"/></svg>
<!--/XL-->
</div>
<div class="a pill" style="left:41px;top:84px;width:236px;height:42px">
<svg class="a" style="left:16px;top:11px" width="20" height="20" viewBox="0 0 20 20"><g transform="rotate(45 10 10)" fill="#fff"><path d="M6.200 1h7.600v2l-1.400 1v4.600l2.600 2.400v1.500H5v-1.500L7.600 8.600V4L6.200 3z"/><rect x="9.200" y="12" width="1.600" height="7"/></g></svg>
<span class="a" style="left:41px;top:10px;font-size:16.400px;line-height:22px;color:#fff;white-space:nowrap">Экран Григорий Орехов</span>
</div>
<div class="a pill" style="left:288px;top:84px;width:155px;height:42px">
<div class="a" style="left:6px;top:6px;width:107px;height:31px;border-radius:16px;background:rgba(165,165,165,.5)"></div>
<svg class="a" style="left:23px;top:12px" width="19" height="18" viewBox="0 0 19 18"><rect x=".5" y=".5" width="18" height="16" rx="4" fill="#fff"/><path d="M9.500 13V5M6 8l3.500-3.500L13 8" fill="none" stroke="#555" stroke-width="2"/></svg>
<span class="a" style="left:49px;top:11px;font-size:16px;font-weight:bold;line-height:22px;color:#fff">Экран</span>
<svg class="a" style="left:124px;top:14px" width="20" height="14" viewBox="0 0 20 14"><rect x=".5" y=".5" width="13" height="12.500" rx="3.500" fill="#fff"/><path d="M14.500 5l4-3v9.500l-4-3z" fill="#fff" stroke="#fff" stroke-width="1" stroke-linejoin="round"/></svg>
</div>
<!--OVERLAY-->
<!--TOPRIGHT-->
<div id="spk" class="a"><span style="color:#707070">Говорит</span> Григорий О.</div>
<div id="linkbtn" class="a">
<svg class="a" style="left:13.500px;top:13.500px" width="19" height="19" viewBox="0 0 20 20" fill="none" stroke="#fff" stroke-width="2" stroke-linecap="round"><path d="M8.6 11.4a3.4 3.4 0 0 0 4.8 0l2.4-2.4a3.4 3.4 0 0 0-4.8-4.8l-1 1"/><path d="M11.4 8.6a3.4 3.4 0 0 0-4.8 0l-2.4 2.4a3.4 3.4 0 0 0 4.8 4.8l1-1"/></svg>
<span class="a" style="left:37.500px;top:13.500px;font-weight:bold;font-size:17.600px;line-height:22px;color:#fff;letter-spacing:-.35px">Ссылка</span>
</div>
<div id="scrollind" class="a"></div>
<svg class="a" style="left:1248px;top:380.500px" width="12" height="16" viewBox="0 0 12 16" fill="none" stroke="#9a9a9a" stroke-width="2.1" stroke-linecap="round" stroke-linejoin="round"><path d="M3 3l5 5-5 5"/></svg>

<div id="t1" class="a tile">
<div class="a" style="left:109px;top:37px;width:80px;height:80px;border-radius:50%;background:#c9d0dd"></div>
<svg class="a" style="left:109px;top:37px" width="80" height="80" viewBox="0 0 80 80"><circle cx="40" cy="29" r="9.5" fill="#f0f1f5"/><path d="M22 57v-4c0-6 8-10.500 18-10.500s18 4.500 18 10.500v4z" fill="#f0f1f5" stroke="#f0f1f5" stroke-width="1" stroke-linejoin="round"/></svg>
<div class="a" style="left:128px;top:134px;font-weight:bold;font-size:15px;line-height:18px;color:#d0d0d0">Вы</div>
<svg class="a micoff" style="left:152px;top:134px" width="16" height="18" viewBox="0 0 16 18"><use href="#micoff"/></svg>
</div>

<div id="t2" class="a tile">
<!--CAM2-->
<svg class="a" style="left:0;top:0" width="294" height="156" viewBox="0 0 294 156">
<defs>
<filter id="b2" x="-5%" y="-5%" width="110%" height="110%"><feGaussianBlur stdDeviation="7"/></filter>
<filter id="b2s" x="-5%" y="-5%" width="110%" height="110%"><feGaussianBlur stdDeviation="5"/></filter>
<linearGradient id="wood" x1="0" x2="1"><stop offset="0" stop-color="#b4765e"/><stop offset=".32" stop-color="#c08468"/><stop offset=".36" stop-color="#b0643e"/><stop offset=".6" stop-color="#bc7048"/><stop offset=".85" stop-color="#a45a38"/><stop offset="1" stop-color="#7c432e"/></linearGradient>
<linearGradient id="lw" x1="0" y1="0" x2="0" y2="1"><stop offset="0" stop-color="#cbc4cc"/><stop offset="1" stop-color="#a89ea6"/></linearGradient>
<linearGradient id="cw" x1="0" x2="1"><stop offset="0" stop-color="#e6ecdc"/><stop offset=".5" stop-color="#e8f2ea"/><stop offset="1" stop-color="#d4ecee"/></linearGradient>
<linearGradient id="bw" x1="0" y1="0" x2="0" y2="1"><stop offset="0" stop-color="#b4e6f6"/><stop offset="1" stop-color="#98d0e8"/></linearGradient>
<radialGradient id="fw" cx=".42" cy=".38" r=".62"><stop offset="0" stop-color="#eef0fa"/><stop offset=".6" stop-color="#e4e2ee"/><stop offset="1" stop-color="#cfb4bc"/></radialGradient>
<radialGradient id="fm" cx=".45" cy=".22" r=".8"><stop offset="0" stop-color="#eeeef2"/><stop offset=".4" stop-color="#d6cacc"/><stop offset=".75" stop-color="#b8a6aa"/><stop offset="1" stop-color="#9c8c92"/></radialGradient>
<linearGradient id="sh2" x1="0" y1="0" x2="0" y2="1"><stop offset="0" stop-color="#000" stop-opacity="0"/><stop offset="1" stop-color="#000" stop-opacity=".32"/></linearGradient>
</defs>
<g transform="scale(.20318) translate(-30,-25)">
<g filter="url(#b2)">
<rect x="-20" y="-20" width="420" height="860" fill="url(#lw)"/>
<rect x="390" y="-20" width="385" height="860" fill="url(#wood)"/>
<rect x="768" y="-20" width="36" height="860" fill="#8a8c90"/>
<rect x="800" y="-20" width="312" height="860" fill="url(#cw)"/>
<rect x="1106" y="-20" width="420" height="860" fill="url(#bw)"/>
<rect x="383" y="-20" width="10" height="580" fill="#6e4838"/>
<rect x="424" y="235" width="13" height="105" rx="5" fill="#e6dcde"/>
<path d="M368 392h145v24H368zM470 416h24v150h-24zM398 416h16v120h-16z" fill="#c49468"/>
<!-- woman: hair back -->
<path d="M20 260C40 120 130 55 230 66c100 12 158 110 158 250 0 140 12 260-16 480H20z" fill="#c86e4c"/>
<path d="M20 250c20-100 80-160 150-180-50 50-70 120-72 200-2 120-20 260-78 360z" fill="#e09470"/>
<path d="M150 80c40-18 90-18 140 8 20 30 20 60 10 90-50-20-100-20-150 6-14-34-14-70 0-104z" fill="#8e6e64"/>
<!-- face -->
<ellipse cx="222" cy="368" rx="126" ry="204" fill="url(#fw)"/>
<path d="M232 70c-22 30-28 70-26 105l14-2c0-36 6-72 22-100z" fill="#e4d4d4"/>
<path d="M250 250c60 40 90 120 80 220-10 50-40 90-80 110 30-60 40-130 30-200-5-50-15-90-30-130z" fill="#d8bcc4" opacity=".8"/>
<!-- hair right side -->
<path d="M305 160c55 60 80 190 75 330-6 120-40 240-95 320h-70c70-110 110-230 112-340 0-120-8-220-22-310z" fill="#b25c3e"/>
<!-- black top -->
<path d="M20 650c40-45 75-62 110-58 50 28 110 28 165-8 95-38 205-8 255 92 16 40 22 90 26 170H20z" fill="#0d0d12"/>
<path d="M20 560c30-20 60-20 90 0-10 70-40 140-90 190z" fill="#cc7a58"/>
<path d="M255 600c40-30 70-72 92-115 12 85-8 205-58 330h-62c42-72 52-145 28-215z" fill="#b46244"/>
<path d="M960 600c100-40 320-40 420 0v240H960z" fill="#7f93a8"/>
<path d="M1050 560h270v120h-270z" fill="#a89aa0"/>
<!-- man hair -->
<path d="M1040 250c0-70 40-130 100-150l30-28 36 22c74 10 136 70 156 176l-6 70c-26-100-90-170-186-170-70 0-112 32-130 80z" fill="#5c5a64"/>
<!-- man face -->
<ellipse cx="1181" cy="398" rx="198" ry="250" fill="url(#fm)"/>
<ellipse cx="988" cy="425" rx="20" ry="46" fill="#c8b4b6"/>
<ellipse cx="1376" cy="405" rx="18" ry="44" fill="#bca8ac"/>
<path d="M1030 500c24 110 84 150 150 150s124-44 156-150c-30 56-84 76-154 76s-122-20-152-76z" fill="#a0929a"/>
<!-- chair & sweater -->
<path d="M1350 492c34-16 96-16 140 0v140h-140z" fill="#1a2c5a"/>
<path d="M672 830c10-100 52-180 124-204 66-28 130-42 196-60 30 56 92 92 190 92 78 0 128-26 160-66 52 2 104 12 150 34v204z" fill="#7f93a8"/>
<path d="M920 650c30-32 60-54 92-66l20 40c-40 12-70 34-92 66z" fill="#6c7f92"/>
<rect x="1440" y="318" width="40" height="56" fill="#c4c08c"/>
</g>
<g filter="url(#b2s)">
<!-- woman features -->
<path d="M125 292c28-16 55-12 75 4M262 300c20-14 48-14 68 0" stroke="#6a5860" stroke-width="12" fill="none"/>
<ellipse cx="163" cy="320" rx="32" ry="12" fill="#3c3640"/><ellipse cx="295" cy="324" rx="30" ry="12" fill="#3c3640"/>
<path d="M185 458c28-12 56-12 82 2-28 18-56 18-82-2z" fill="#b47680"/>
<path d="M225 340c0 30-4 50-2 62 8 10 22 12 36 8" stroke="#c4aab2" stroke-width="9" fill="none"/>
<!-- man features -->
<path d="M1020 345c30-18 74-18 104 0M1200 332c36-16 74-14 106 6" stroke="#746870" stroke-width="14" fill="none"/>
<ellipse cx="1070" cy="382" rx="38" ry="14" fill="#3a3a44"/><ellipse cx="1250" cy="368" rx="38" ry="14" fill="#3a3a44"/>
<path d="M1160 380c-8 40-26 62-34 84 22 16 62 16 92-2" stroke="#a08e96" stroke-width="14" fill="none"/>
<path d="M1112 528c34-18 88-18 120 0-32 26-88 26-120 0z" fill="#4c343a"/>
<path d="M1124 522c32-8 66-8 98 0" stroke="#e4e0e4" stroke-width="8" fill="none"/>
</g>
<rect x="0" y="600" width="1520" height="220" fill="url(#sh2)"/>
</g>
</svg>
<!--/CAM2-->
<svg class="a" style="left:139.500px;top:9.500px" width="16" height="16" viewBox="0 0 16 16"><g transform="rotate(45 8 8)" fill="#fff"><path d="M5 1h6v1.600l-1 .8v3.600l2 1.800v1.200H4V8.800l2-1.800V3.400l-1-.8z"/><rect x="7.400" y="10" width="1.200" height="5.500"/></g></svg>
<svg class="a" style="left:8px;top:129px" width="18.300" height="16" viewBox="0 0 16 14"><rect x=".5" y=".5" width="15" height="13" rx="3" fill="#e4e4e8"/><path d="M8 11V4.200M5.300 6.700L8 4l2.700 2.700" fill="none" stroke="#333" stroke-width="1.500"/></svg>
<div class="a tname" style="top:131px;color:#e0e0e0;letter-spacing:.3px">Григорий Орехов</div>
</div>

<div id="t3" class="a tile">
<div class="a tname" style="top:135px;left:-10.500px;font-size:15.100px">Елена Николаевна Гальцова</div>
<svg class="a micoff" style="left:250px;top:135px" width="16" height="18" viewBox="0 0 16 18"><use href="#micoff"/></svg>
</div>

<div id="t4" class="a tile">
<!--CAM4-->
<svg class="a" style="left:0;top:0" width="300" height="146" viewBox="0 0 300 146">
<defs>
<filter id="b4" x="-5%" y="-5%" width="110%" height="110%"><feGaussianBlur stdDeviation="6"/></filter>
<filter id="b4s" x="-5%" y="-5%" width="110%" height="110%"><feGaussianBlur stdDeviation="5"/></filter>
<linearGradient id="wl4" x1="0" x2="1"><stop offset="0" stop-color="#cdd2b4"/><stop offset=".55" stop-color="#e9edd4"/><stop offset="1" stop-color="#dfe4c6"/></linearGradient>
<radialGradient id="hr4" cx=".4" cy=".3" r=".75"><stop offset="0" stop-color="#8e8c8e"/><stop offset=".45" stop-color="#666264"/><stop offset="1" stop-color="#363234"/></radialGradient>
<radialGradient id="fc4" cx=".45" cy=".35" r=".7"><stop offset="0" stop-color="#c09078"/><stop offset=".7" stop-color="#a4745e"/><stop offset="1" stop-color="#7c5446"/></radialGradient>
<filter id="rg4" x="-10%" y="-10%" width="120%" height="120%"><feTurbulence type="fractalNoise" baseFrequency=".012 .02" numOctaves="3" seed="4" result="n"/><feDisplacementMap in="SourceGraphic" in2="n" scale="70" xChannelSelector="R" yChannelSelector="G"/></filter>
<filter id="tx4" x="0" y="0" width="100%" height="100%"><feTurbulence type="fractalNoise" baseFrequency=".01 .035" numOctaves="3" seed="9" result="n"/><feColorMatrix in="n" type="matrix" values="0 0 0 0 .5  0 0 0 0 .5  0 0 0 0 .5  1.6 0 0 0 -.55" result="m"/><feComposite in="m" in2="SourceGraphic" operator="in"/></filter>
</defs>
<g transform="scale(.19042) translate(-15,-15)">
<g filter="url(#b4)">
<rect x="0" y="0" width="1620" height="800" fill="url(#wl4)"/>
<!-- shelf unit -->
<rect x="0" y="0" width="840" height="800" fill="#5a4034"/>
<rect x="0" y="0" width="60" height="800" fill="#d4d8d4"/>
<path d="M45 15h60l20 770H100z" fill="#7c5e4e"/>
<rect x="15" y="600" width="95" height="190" fill="#2c2628"/>
<rect x="20" y="640" width="80" height="14" fill="#c8c8cc"/>
<rect x="20" y="300" width="40" height="250" fill="#e8ecec"/>
<rect x="730" y="0" width="105" height="360" fill="#8c6242"/>
<rect x="100" y="15" width="635" height="185" fill="#54382c"/>
<rect x="90" y="100" width="175" height="100" fill="#e8ecf0"/>
<rect x="260" y="95" width="215" height="95" fill="#e4e8f0"/>
<rect x="262" y="88" width="210" height="22" fill="#4c8cd4"/>
<circle cx="395" cy="150" r="12" fill="#3a3a40"/>
<rect x="470" y="20" width="222" height="168" fill="#e2e6e6"/>
<path d="M470 50h220M470 80h220M470 110h220M470 140h220" stroke="#a8b0b0" stroke-width="8"/>
<rect x="688" y="18" width="40" height="165" fill="#52a034"/>
<path d="M215 20c10 120 20 250 30 400" stroke="#7a9a50" stroke-width="8" fill="none"/>
<rect x="90" y="192" width="650" height="24" fill="#8c6c5a"/>
<rect x="112" y="216" width="625" height="330" fill="#4c362c"/>
<rect x="316" y="234" width="146" height="218" fill="#8c8682"/>
<rect x="130" y="470" width="380" height="80" fill="#c4c8c4"/>
<rect x="270" y="520" width="240" height="30" fill="#3c4a40"/>
<rect x="520" y="350" width="205" height="235" fill="#5c606c"/>
<rect x="520" y="345" width="205" height="30" fill="#3a3c44"/>
<circle cx="632" cy="425" r="20" fill="#1c1c20"/>
<rect x="585" y="510" width="118" height="62" fill="#e0dcdc"/>
<ellipse cx="515" cy="500" rx="22" ry="28" fill="#c8c0a0"/>
<rect x="110" y="545" width="600" height="36" fill="#b48c6c"/>
<rect x="112" y="581" width="500" height="220" fill="#8a6448"/>
<path d="M200 800l120-100h250v100z" fill="#b8aca4"/>
<rect x="540" y="600" width="70" height="150" fill="#d8d0d0"/>
<path d="M560 640l40 90" stroke="#c03040" stroke-width="10"/>
<!-- radiator -->
<rect x="1462" y="595" width="140" height="200" fill="#ecECEC"/>
<path d="M1500 620v170M1550 620v170" stroke="#8a8a8a" stroke-width="14"/>
<!-- chair -->
<path d="M1235 235c60 0 100 60 100 190h-100z" fill="#18181a"/>
<!-- clothes -->
<path d="M575 800c10-90 40-170 80-200 40-20 90-20 140-10l150 100 150 20c60-80 130-150 190-160 70-10 150-10 180 20 30 60 40 140 45 230z" fill="#2a2c32"/>
<!-- hair -->
<g filter="url(#rg4)"><path d="M700 560c-20-120 20-260 90-360 60-100 170-150 280-140 110 10 200 80 240 180 40 110 40 230 10 330-20 60-60 100-100 130l-330 30c-70 10-150-50-190-170z" fill="url(#hr4)"/><path d="M700 560c-20-120 20-260 90-360 60-100 170-150 280-140 110 10 200 80 240 180 40 110 40 230 10 330-20 60-60 100-100 130l-330 30c-70 10-150-50-190-170z" fill="#d0d0d0" filter="url(#tx4)" opacity=".55"/></g>
<path d="M760 520c0-140 60-260 170-330M830 600c-40-150 10-300 120-380M1180 120c80 60 120 160 110 300M1250 200c60 100 60 240 20 360M900 110c80-40 180-30 250 20" stroke="#b0aeb0" stroke-width="14" fill="none" opacity=".55"/><path d="M800 300c40-90 110-150 200-170M1290 300c20 90 10 200-30 290M740 480c10 80 40 150 90 200" stroke="#3a3638" stroke-width="16" fill="none" opacity=".5"/>
<!-- face -->
<ellipse cx="1010" cy="490" rx="165" ry="205" fill="url(#fc4)"/>
<path d="M780 420c20-100 90-170 180-200-60 60-90 130-100 200-10 80 0 160 30 240-50-40-100-130-110-240z" fill="#6c686a"/>
<!-- hand -->
<path d="M930 790c-10-90 10-160 70-200 50-30 80-80 110-140 20-40 60-60 90-50 30 20 30 70 20 130-10 80-50 140-100 180l-20 80z" fill="#c49678"/>
</g>
<g filter="url(#b4s)">
<path d="M870 400c25-14 60-16 85-6M1040 396c30-12 70-10 100 6" stroke="#5a4440" stroke-width="12" fill="none"/><ellipse cx="915" cy="432" rx="28" ry="11" fill="#2c2424"/><ellipse cx="1085" cy="430" rx="30" ry="11" fill="#2c2424"/>
<path d="M985 440c-5 40-10 70-5 95 15 12 35 12 50 2" stroke="#8a5c4c" stroke-width="12" fill="none"/>
<path d="M925 612c25-14 60-14 85-2" stroke="#7a4448" stroke-width="14" fill="none"/>
<path d="M1120 560c20-40 40-90 70-130M1150 600c20-40 40-80 60-120" stroke="#9c6c54" stroke-width="8" fill="none"/>
</g>
</g>
</svg>
<!--/CAM4-->
<div class="a tname" style="top:134px;left:-10px;letter-spacing:-.2px">Евгения Гуляева</div>
<svg class="a micoff" style="left:204px;top:134px" width="16" height="18" viewBox="0 0 16 18"><use href="#micoff"/></svg>
</div>
<!--TILES-->
<svg class="a" style="left:38px;top:757px" width="26" height="22" viewBox="0 0 26 22"><rect x="1" y="1" width="24" height="20" rx="5" fill="#e4e4e8"/><path d="M13 16.200V7.200M9.300 10.400L13 6.700l3.700 3.700" fill="none" stroke="#1b1b1b" stroke-width="2.300"/></svg>
<svg class="a" style="left:117px;top:757px" width="32" height="24" viewBox="0 0 32 24"><rect x="1.300" y="1" width="24.900" height="20" rx="5.500" fill="#e4e4e8"/><path d="M1.500 10.200c2-2.800 4.500-5 6.300-3.200 1.800 2 1.500 6.500 3.600 7 2 .3 4-3 6.600-5.500" fill="none" stroke="#1b1b1b" stroke-width="2.300" stroke-linecap="round"/><path d="M14.500 22.500L27 10.500" stroke="#1b1b1b" stroke-width="7.600" stroke-linecap="round"/><path d="M15.800 21.200L27 10.500" stroke="#e4e4e8" stroke-width="4.200" stroke-linecap="round"/><path d="M22.800 10.200l3.400 3.600" stroke="#1b1b1b" stroke-width="1.300"/></svg>
<div class="a" style="left:149px;top:738px;width:32px;height:17px;border-radius:9px;background:#a7a7ab;color:#e6e6ea;font-size:12.500px;line-height:16px;text-align:center;letter-spacing:-.2px">beta</div>

<div class="a cbtn" style="left:630px;background:#111"></div>
<svg class="a" style="left:645px;top:754px" width="27" height="29" viewBox="0 0 28 30"><path d="M6.500 4.500a1.600 1.600 0 0 1 3.200 0V13h.8V2.800a1.600 1.600 0 0 1 3.200 0V13h.8V3.800a1.600 1.600 0 0 1 3.200 0V14h.8V7a1.600 1.600 0 0 1 3.200 0v10.500l2.300-2.600a1.700 1.700 0 0 1 2.600 2.200l-5.200 7.400a6 6 0 0 1-5 2.500h-3.400a6.500 6.500 0 0 1-6.500-6.500z" fill="#fff"/></svg>
<div class="a cbtn" style="left:720px;background:#fff"></div>
<svg class="a" style="left:734px;top:755px" width="32" height="26" viewBox="0 0 32 26"><rect x="3" y="5" width="18" height="16" rx="4" fill="#111"/><path d="M22 11.500l6-4v11l-6-4z" fill="#111" stroke="#111" stroke-width="1.500" stroke-linejoin="round"/><path d="M4 4l18 18" stroke="#fff" stroke-width="5"/><path d="M4 4l18 18" stroke="#e5484d" stroke-width="2.200" stroke-linecap="round"/></svg>
<div class="a cbtn" style="left:810px;background:#fff"></div>
<svg class="a" style="left:826px;top:753px" width="28" height="30" viewBox="0 0 28 30"><rect x="10" y="3" width="8" height="14" rx="4" fill="#111"/><path d="M6.500 14a7.500 7.500 0 0 0 15 0M14 21.500v5" fill="none" stroke="#111" stroke-width="2.200" stroke-linecap="round"/><path d="M6 4l16 18" stroke="#fff" stroke-width="5"/><path d="M6 4l16 18" stroke="#e5484d" stroke-width="2.200" stroke-linecap="round"/></svg>
<div class="a cbtn" style="left:900px;background:#e5484d"></div>
<svg class="a" style="left:918px;top:756px" width="24" height="24" viewBox="0 0 24 24"><path d="M3.300 3.300l17.400 17.400M20.700 3.300L3.300 20.700" stroke="#fff" stroke-width="2.600" stroke-linecap="round"/></svg>

<svg class="a" style="left:1130px;top:754px" width="28" height="28" viewBox="0 0 28 28"><path d="M14 3.500c6.600 0 12 4.300 12 9.700s-5.400 9.700-12 9.700c-1.400 0-2.800-.2-4-.6-1.500 1.300-3.800 2.600-6.500 2.600 1.400-1.500 2.200-3.300 2.400-4.800C3.500 18.400 2 15.900 2 13.200c0-5.400 5.400-9.700 12-9.700z" fill="#e6e6ea"/></svg>
<svg class="a" style="left:1208px;top:754px" width="30" height="28" viewBox="0 0 30 28"><circle cx="10.300" cy="9.400" r="4" fill="#e6e6ea"/><path d="M2 22.500v-1.600c0-4 3.800-6.200 8.300-6.200s8.300 2.200 8.300 6.200v1.600z" fill="#e6e6ea"/><path d="M19.500 13.200a4 4 0 0 0 0-7.600c1.200 1 1.800 2.400 1.800 3.800s-.6 2.800-1.800 3.800zM21 22.500h8.500v-1.600c0-3.400-2.800-5.500-6.500-6 1.200 1.300 2 3.200 2 6z" fill="#e6e6ea"/></svg>
<div class="a" style="left:1222.500px;top:747.500px;width:28px;height:17px;border-radius:9px;background:#4a90e2;color:#fff;font-size:11px;font-weight:bold;line-height:17px;text-align:center;letter-spacing:-.2px">99+</div>
<svg class="a" style="left:1291px;top:755.200px" width="25.800" height="25.800" viewBox="0 0 28 28" fill="none" stroke="#e6e6ea" stroke-width="2.400"><rect x="3" y="3" width="8.500" height="8.500" rx="2"/><rect x="16.500" y="3" width="8.500" height="8.500" rx="2"/><rect x="3" y="16.500" width="8.500" height="8.500" rx="2"/><rect x="16.500" y="16.500" width="8.500" height="8.500" rx="2"/></svg>
<svg class="a" style="left:1368.300px;top:754.500px" width="27" height="27" viewBox="0 0 30 30"><g fill="#e6e6ea"><circle cx="15" cy="15" r="10.300"/><g id="tooth"><rect x="11.800" y="1.200" width="6.400" height="6" rx="1.800"/></g><use href="#tooth" transform="rotate(45 15 15)"/><use href="#tooth" transform="rotate(90 15 15)"/><use href="#tooth" transform="rotate(135 15 15)"/><use href="#tooth" transform="rotate(180 15 15)"/><use href="#tooth" transform="rotate(225 15 15)"/><use href="#tooth" transform="rotate(270 15 15)"/><use href="#tooth" transform="rotate(315 15 15)"/></g><circle cx="15" cy="15" r="5.800" fill="#1b1b1b"/></svg>
<svg class="a" style="left:1446.800px;top:755.700px" width="24.500" height="24.500" viewBox="0 0 26 26"><rect x="2.200" y="2.200" width="21.600" height="21.600" rx="5" fill="none" stroke="#e6e6ea" stroke-width="2.400"/><path d="M3 13h10v10H7a4 4 0 0 1-4-4z" fill="#e6e6ea"/></svg>
<svg class="a" style="left:1527.200px;top:755.800px" width="24" height="24" viewBox="0 0 26 26" fill="none" stroke="#e6e6ea" stroke-width="2.200" stroke-linecap="round" stroke-linejoin="round"><path d="M15 11l8-8M17 3h6v6M11 15l-8 8M3 17v6h6"/></svg>
<!--BAR-->
</body>
</html>
